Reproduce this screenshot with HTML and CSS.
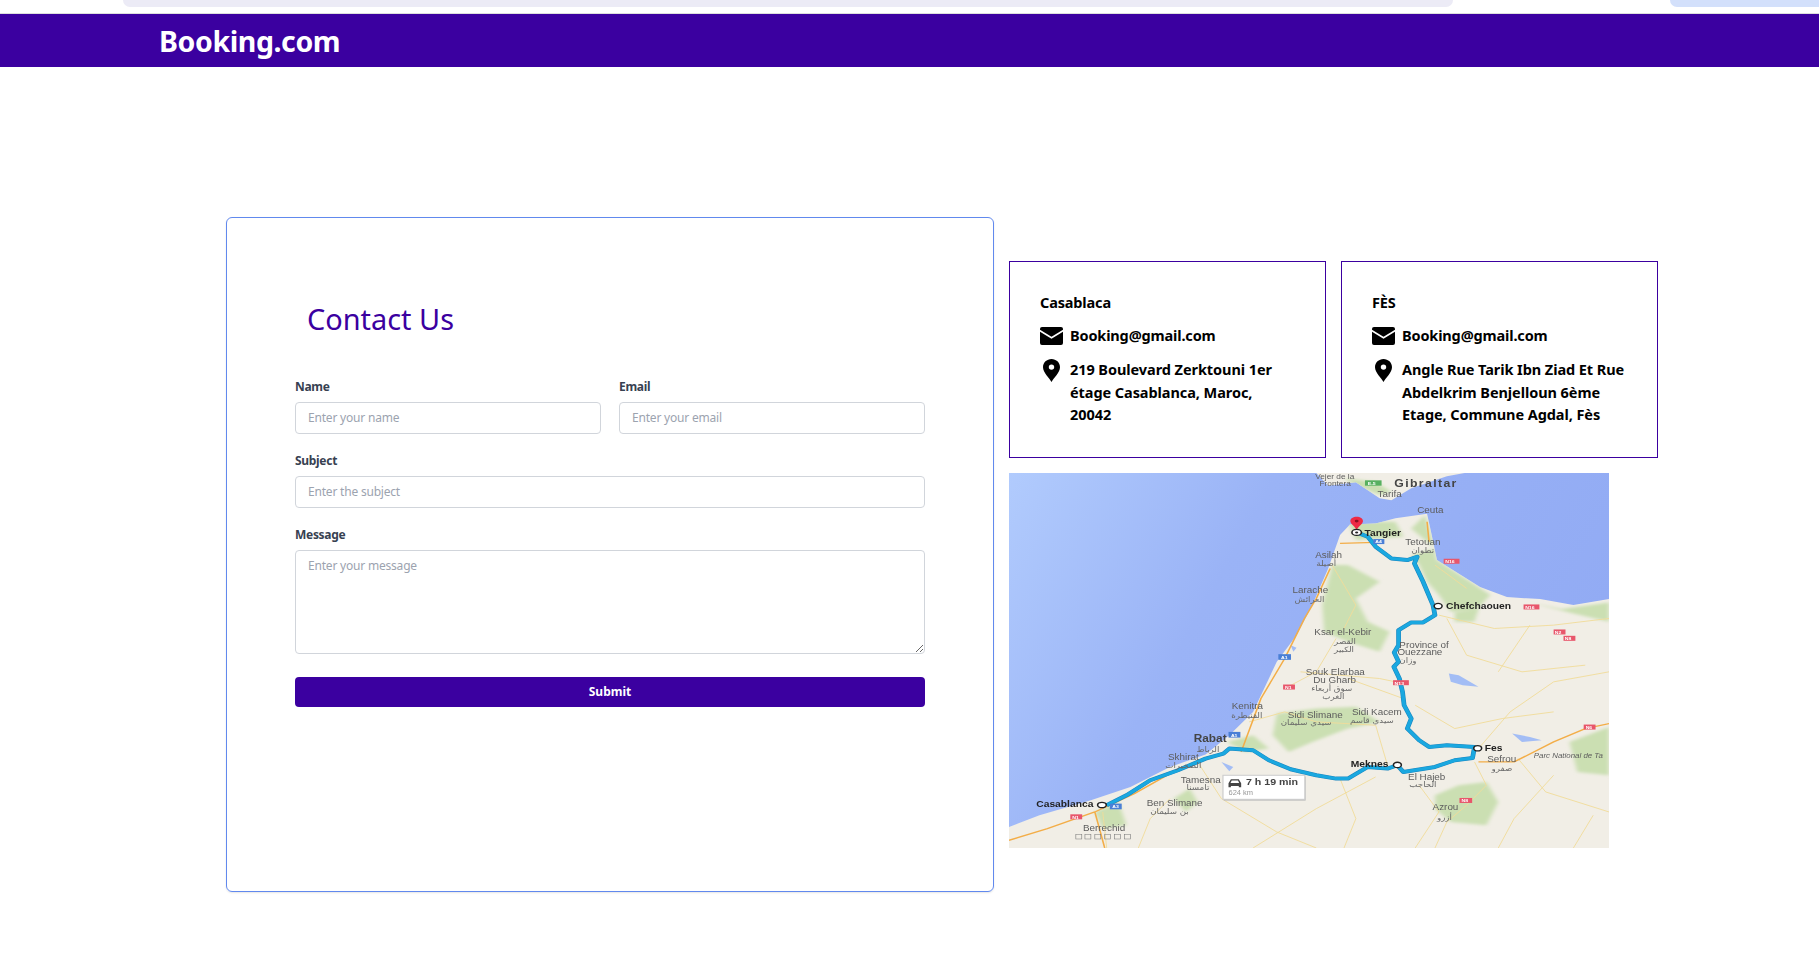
FILE: index.html
```html
<!DOCTYPE html>
<html lang="en">
<head>
<meta charset="utf-8">
<title>Booking.com - Contact Us</title>
<link rel="stylesheet" href="styles.css">
</head>
<body>
<div class="topstrip"><div class="pill-search"></div><div class="pill-action"></div></div>
<header class="navbar"><span class="brand">Booking.com</span></header>
<main class="contact-page">
  <section class="form-card">
    <h1 class="form-title">Contact Us</h1>
    <form class="form">
      <div class="row-two">
        <div class="field"><label class="label">Name</label><input class="input" type="text" placeholder="Enter your name"></div>
        <div class="field"><label class="label">Email</label><input class="input" type="email" placeholder="Enter your email"></div>
      </div>
      <div class="field"><label class="label">Subject</label><input class="input" type="text" placeholder="Enter the subject"></div>
      <div class="field"><label class="label">Message</label><textarea class="input textarea" placeholder="Enter your message"></textarea></div>
      <button class="submit" type="button">Submit</button>
    </form>
  </section>
  <aside class="info-col">
    <div class="offices">
      <article class="office">
        <h2 class="office-name">Casablaca</h2>
        <div class="office-row mail-row">
          <svg class="ico-mail" viewBox="0 0 23 18"><path d="M2 0h19a2 2 0 0 1 2 2v.7L11.5 9.8 0 2.7V2a2 2 0 0 1 2-2z"/><path d="M0 4.7l11.5 7.1L23 4.7V16a2 2 0 0 1-2 2H2a2 2 0 0 1-2-2z"/></svg>
          <span>Booking@gmail.com</span>
        </div>
        <div class="office-row addr-row">
          <svg class="ico-pin" viewBox="0 0 17 23"><path fill-rule="evenodd" d="M8.5 0C3.8 0 0 3.6 0 8.2 0 13.5 6.5 19 8.5 23c2-4 8.5-9.5 8.5-14.8C17 3.6 13.2 0 8.5 0zm0 10.8a2.7 2.7 0 1 1 0-5.4 2.7 2.7 0 0 1 0 5.4z"/></svg>
          <span>219 Boulevard Zerktouni 1er<br>étage Casablanca, Maroc,<br>20042</span>
        </div>
      </article>
      <article class="office">
        <h2 class="office-name">FÈS</h2>
        <div class="office-row mail-row">
          <svg class="ico-mail" viewBox="0 0 23 18"><path d="M2 0h19a2 2 0 0 1 2 2v.7L11.5 9.8 0 2.7V2a2 2 0 0 1 2-2z"/><path d="M0 4.7l11.5 7.1L23 4.7V16a2 2 0 0 1-2 2H2a2 2 0 0 1-2-2z"/></svg>
          <span>Booking@gmail.com</span>
        </div>
        <div class="office-row addr-row">
          <svg class="ico-pin" viewBox="0 0 17 23"><path fill-rule="evenodd" d="M8.5 0C3.8 0 0 3.6 0 8.2 0 13.5 6.5 19 8.5 23c2-4 8.5-9.5 8.5-14.8C17 3.6 13.2 0 8.5 0zm0 10.8a2.7 2.7 0 1 1 0-5.4 2.7 2.7 0 0 1 0 5.4z"/></svg>
          <span>Angle Rue Tarik Ibn Ziad Et Rue<br>Abdelkrim Benjelloun 6ème<br>Etage, Commune Agdal, Fès</span>
        </div>
      </article>
    </div>
    <svg class="map" viewBox="23 24 1517 1124" preserveAspectRatio="none">
      <defs>
        <linearGradient id="sea" x1="0" y1="0" x2="1" y2="0.35">
          <stop offset="0" stop-color="#b1cbfd"/><stop offset="0.4" stop-color="#9ab3f6"/><stop offset="1" stop-color="#92abf4"/>
        </linearGradient>
        <filter id="soft"><feGaussianBlur stdDeviation="5 4"/></filter>
        <clipPath id="shore"><path d="M23 1085 100 1050 230 1005 330 965 430 905 520 868 580 810 640 740 700 590 750 510 790 420 830 310 860 210 885 178 950 175 1000 160 1080 146 1090 200 1105 285 1214 366 1282 396 1366 402 1450 420 1540 402V1148H23ZM800 24 830 62 900 52 960 100 990 106 1040 70 1130 34 1175 24Z"/></clipPath>
      </defs>
      <rect x="23" y="24" width="1517" height="1124" fill="url(#sea)"/>
      <path class="land" d="M23 1085 100 1050 230 1005 330 965 430 905 520 868 580 810 640 740 700 590 750 510 790 420 830 310 860 210 885 178 950 175 1000 160 1080 146 1090 200 1105 285 1214 366 1282 396 1366 402 1450 420 1540 402V1148H23Z"/>
      <path class="land" d="M800 24 830 62 900 52 960 100 990 106 1040 70 1130 34 1175 24Z"/>
      <g class="greens">
        <path d="M1075 150 1090 210 1105 285 1190 350 1240 390 1200 440 1140 440 1110 390 1080 350 1060 300 1040 270 1100 250 1040 190Z"/>
        <path d="M840 300 880 300 960 350 900 400 930 470 985 500 960 560 880 530 820 500 815 420Z"/>
        <path d="M700 745 800 730 900 725 960 770 880 790 790 830 730 860 690 810Z"/>
        <path d="M575 830 640 810 680 850 620 860Z"/>
        <path d="M1440 830 1540 785V930L1460 920Z"/>
        <path d="M1100 990 1160 960 1230 950 1260 1010 1230 1080 1140 1070 1100 1030Z"/>
        <path d="M1340 412 1420 432 1540 412V470L1450 445Z"/>
        <path d="M240 1040 300 1010 320 1080 260 1090Z"/>
        <path d="M440 1000 480 970 500 1010 470 1040Z"/>
        <path d="M1150 440 1210 430 1200 470 1150 470Z"/>
        <path d="M880 170 1000 170 1020 215 900 225Z"/>
        <path d="M870 40 900 62 960 90 990 80 950 50Z"/>
      </g>
      <path class="lake" d="M1135 625 1160 630 1210 665 1170 660 1140 650Z"/>
      <path class="lake" d="M1295 805 1340 815 1370 825 1320 830Z"/>
      <path class="lake" d="M560 890 590 905 580 918Z"/>
      <path class="lake" d="M735 540 750 548 742 560Z"/>
      <path class="road-y" d="M1110 450 1250 490 1400 480 1540 460M760 620 960 640 1000 650M720 670 800 620 850 520M1200 890 1230 960 1180 1020 1130 1070 1100 1148M500 890 560 1000 700 1100 800 1148M950 780 980 900M1310 880 1380 980 1540 1040M1210 850 1290 740 1400 650 1540 620M950 935 800 1030 640 1148M260 1040 270 1148M1050 720 1150 790 1270 760 1400 740M840 300 900 420 870 490M1130 460 1180 570 1320 620 1480 600M630 770 720 740 800 770 950 780M1020 700 880 640M1340 480 1260 620M1050 1148 1110 1040 1060 960M1400 930 1300 1060 1260 1148M350 1148 380 1060 430 1000M1100 300 1180 370M860 940 900 1060 870 1148M1450 1148 1500 1050"/>
      <path class="road-o" d="M860 235 950 232M610 860 660 700 720 580 770 460 800 400 835 310M23 1125 120 1090 240 1040 340 985 430 925 520 880M1210 890 1300 890 1400 830 1480 790 1540 775M240 1040 265 1148M1080 170 1085 230"/>
      <path class="route-edge" d="M902 202 930 215 950 245 990 280 1030 285 1055 275 1048 295 1070 350 1095 420 1100 450 1070 472 1040 472 1008 495 1008 540 997 562 1008 590 996 605 1010 640 1018 680 1022 720 1040 760 1030 790 1060 825 1085 845 1130 840 1200 845 1195 878 1150 885 1100 905 1020 920 1005 900 980 910 930 905 880 940 850 940 800 930 735 912 680 885 640 855 580 850 565 865 520 880 450 915 380 945 320 990 270 1020"/>
      <path class="route" d="M902 202 930 215 950 245 990 280 1030 285 1055 275 1048 295 1070 350 1095 420 1100 450 1070 472 1040 472 1008 495 1008 540 997 562 1008 590 996 605 1010 640 1018 680 1022 720 1040 760 1030 790 1060 825 1085 845 1130 840 1200 845 1195 878 1150 885 1100 905 1020 920 1005 900 980 910 930 905 880 940 850 940 800 930 735 912 680 885 640 855 580 850 565 865 520 880 450 915 380 945 320 990 270 1020"/>
      <path class="pin" d="M902 155c-9 0-16 5-16 13 0 9 12 16 16 27 4-11 16-18 16-27 0-8-7-13-16-13z"/>
      <ellipse class="pin-dot" cx="902" cy="168" rx="5" ry="4"/>
      <ellipse class="stop" cx="902" cy="202" rx="12" ry="9"/><ellipse class="stop-dot" cx="902" cy="202" rx="4" ry="3"/>
      <ellipse class="stop" cx="1108" cy="423" rx="10" ry="8"/>
      <ellipse class="stop" cx="1208" cy="849" rx="10" ry="8"/>
      <ellipse class="stop" cx="1005" cy="899" rx="10" ry="8"/>
      <ellipse class="stop" cx="258" cy="1019" rx="11" ry="8"/>
      <g class="shield-b"><rect x="944" y="222" width="28" height="15"/><text x="949" y="235">A4</text><rect x="704" y="567" width="32" height="17"/><text x="711" y="581">A1</text><rect x="578" y="800" width="30" height="17"/><text x="584" y="814">A1</text><rect x="278" y="1015" width="30" height="17"/><text x="284" y="1029">A3</text></g>
      <g class="shield-r"><rect x="1122" y="281" width="40" height="15"/><text x="1126" y="294">N16</text><rect x="1324" y="418" width="40" height="15"/><text x="1328" y="431">N16</text><rect x="1400" y="493" width="30" height="15"/><text x="1403" y="506">N2</text><rect x="1425" y="512" width="30" height="15"/><text x="1428" y="525">N8</text><rect x="994" y="645" width="40" height="15"/><text x="998" y="658">N13</text><rect x="716" y="658" width="30" height="15"/><text x="721" y="671">N1</text><rect x="1476" y="778" width="30" height="15"/><text x="1481" y="791">N6</text><rect x="1162" y="998" width="32" height="15"/><text x="1167" y="1011">N8</text><rect x="178" y="1047" width="30" height="15"/><text x="183" y="1060">N1</text></g>
      <g class="shield-g"><rect x="923" y="46" width="42" height="16"/><text x="930" y="59">E-5</text></g>
      <g class="ml">
        <text class="tight" x="797" y="43">Vejer de la</text><text class="tight" x="808" y="62">Frontera</text><text x="955" y="96">Tarifa</text><text x="1055" y="143">Ceuta</text>
        <text x="1025" y="240">Tetouan</text><text x="797" y="280">Asilah</text><text x="740" y="385">Larache</text><text x="795" y="510">Ksar el-Kebir</text>
        <text x="1010" y="548">Province of</text><text x="1005" y="571">Ouezzane</text><text x="773" y="630">Souk Elarbaa</text><text x="792" y="654">Du Gharb</text>
        <text x="586" y="732">Kenitra</text><text x="728" y="758">Sidi Slimane</text><text x="890" y="748">Sidi Kacem</text><text x="425" y="884">Skhirat</text>
        <text x="457" y="952">Tamesna</text><text x="1232" y="891">Sefrou</text><text x="1032" y="945">El Hajeb</text><text x="1094" y="1035">Azrou</text>
        <text x="371" y="1022">Ben Slimane</text><text x="210" y="1098">Berrechid</text><text class="park" x="1350" y="878">Parc National de Ta</text>
      </g>
      <g class="ml ar">
        <text x="1040" y="263">تطوان</text><text x="800" y="303">أصيلة</text><text x="745" y="412">العرائش</text><text x="845" y="536">القصر</text><text x="845" y="561">الكبير</text>
        <text x="1010" y="595">وزان</text><text x="787" y="678">سوق أربعاء</text><text x="815" y="702">الغرب</text><text x="585" y="757">القنيطرة</text><text x="710" y="780">سيدي سليمان</text>
        <text x="885" y="772">سيدي قاسم</text><text x="497" y="860">الرباط</text><text x="418" y="908">الصخيرات</text><text x="472" y="975">تامسنا</text><text x="1243" y="918">صفرو</text>
        <text x="1035" y="966">الحاجب</text><text x="1105" y="1065">أزرو</text><text x="380" y="1045">بن سليمان</text>
      </g>
      <text class="mb big" x="997" y="67">Gibraltar</text>
      <text class="mb" x="922" y="212">Tangier</text>
      <text class="mb" x="1128" y="432">Chefchaouen</text>
      <text class="mb" x="1226" y="857">Fes</text>
      <text class="mb" x="887" y="906">Meknes</text>
      <text class="mb" x="92" y="1026">Casablanca</text>
      <text class="mb rabat" x="490" y="830">Rabat</text>
      <g class="tofu"><rect x="192" y="1108" width="15" height="13"/><rect x="215" y="1108" width="15" height="13"/><rect x="240" y="1108" width="15" height="13"/><rect x="265" y="1108" width="15" height="13"/><rect x="290" y="1108" width="15" height="13"/><rect x="315" y="1108" width="15" height="13"/></g>
      <rect class="tip-shadow" x="566" y="934" width="207" height="72"/>
      <rect class="tip" x="564" y="930" width="207" height="72"/>
      <path class="car" d="M584 942h20l6 12v12h-6v-4h-20v4h-6v-12zm2 4-3 7h22l-3-7z"/>
      <text class="mb trip" x="622" y="960">7 h 19 min</text>
      <text class="km" x="578" y="988">624 km</text>
    </svg>
  </aside>
</main>
</body>
</html>
```

FILE: styles.css
```css
* { box-sizing: border-box; }
html, body { margin: 0; padding: 0; background: #fff; }
body { font-family: "Noto Sans", "Liberation Sans", sans-serif; color: #000; overflow: hidden; height: 980px; }

.topstrip { display: flex; height: 14px; padding-left: 123px; border-bottom: 1px solid #ddd; }
.pill-search { width: 1330px; height: 7px; background: #ecebf6; border-radius: 0 0 14px 14px; }
.pill-action { flex: 1; height: 7px; margin-left: 217px; background: #d3e0fb; border-radius: 0 0 0 14px; }

.navbar { height: 53px; background: #3b00a0; display: flex; align-items: center; padding: 2px 0 0 159px; }
.brand { color: #fff; font-size: 28.5px; font-weight: 700; letter-spacing: -0.4px; line-height: 1; }

.contact-page { display: flex; align-items: flex-start; padding: 150px 0 0 226px; gap: 15px; }

.form-card { width: 768px; height: 675px; border: 1px solid #6189ee; border-radius: 6px; box-shadow: 0 1px 2px rgba(0,0,0,.1); padding: 81px 68px 0; }
.form-title { margin: 0 0 39px 12px; font-size: 28.9px; line-height: 40px; font-weight: 400; color: #3b00a0; }

.form { display: flex; flex-direction: column; gap: 18px; }
.row-two { display: grid; grid-template-columns: 306px 306px; gap: 18px; }
.field { display: flex; flex-direction: column; }
.label { font-size: 12px; line-height: 18px; font-weight: 700; letter-spacing: -0.3px; color: #374151; margin-bottom: 6px; }
.input { display: block; width: 100%; height: 32px; padding: 0 12px 2px; border: 1px solid #d1d5db; border-radius: 4px; font: 400 12px "Noto Sans", sans-serif; letter-spacing: -0.2px; color: #111; background: #fff; outline: none; }
.input::placeholder { color: #9ca3af; opacity: 1; }
.textarea { height: 104px; padding: 6px 12px; resize: vertical; }
.submit { height: 30px; margin-top: 5px; padding: 0 0 2px; border: 0; border-radius: 4px; background: #3b00a0; color: #fff; font: 700 12px "Noto Sans", sans-serif; }

.info-col { width: 649px; padding-top: 44px; display: flex; flex-direction: column; gap: 15px; }
.offices { display: flex; gap: 15px; }
.office { width: 317px; height: 197px; border: 1px solid #3b00a0; padding: 30px 20px 0 30px; font-size: 14.5px; font-weight: 700; letter-spacing: -0.15px; line-height: 22.5px; }
.office-name { margin: 0 0 15px; font-size: 14.5px; line-height: 20px; font-weight: 700; }
.office-row { display: flex; }
.ico-mail { width: 23px; height: 18px; margin-right: 7px; flex: none; fill: #000; }
.ico-pin { width: 17px; height: 23px; margin: 0 10px 0 3px; flex: none; fill: #000; }
.mail-row { align-items: center; height: 18px; }
.mail-row span { margin-top: -2px; }
.addr-row { margin-top: 14px; align-items: flex-start; letter-spacing: -0.07px; }
.addr-row span { margin-top: -1px; }

.map { display: block; width: 600px; height: 375px; filter: blur(0.4px); }
.land { fill: #f1eee6; }
.greens { clip-path: url(#shore); }
.greens path { fill: #cbdfb2; filter: url(#soft); }
.lake { fill: #a3bdf5; }
.road-o { fill: none; stroke: #f3ad47; stroke-width: 4; stroke-linejoin: round; }
.road-y { fill: none; stroke: #f1dc9a; stroke-width: 2.5; stroke-linejoin: round; }
.route-edge { fill: none; stroke: #1b86bf; stroke-width: 12; stroke-linejoin: round; }
.route { fill: none; stroke: #1aa8e0; stroke-width: 9; stroke-linejoin: round; }
.pin { fill: #ee2a45; }
.pin-dot { fill: #8a0f1f; }
.stop { fill: #fff; stroke: #222; stroke-width: 4; }
.stop-dot { fill: #222; }
.shield-b rect { fill: #4a7fd6; }
.shield-r rect { fill: #e8566b; }
.shield-g rect { fill: #57b060; }
.shield-b text, .shield-r text, .shield-g text { font: 700 13px "Liberation Sans", sans-serif; fill: #fff; }
.ml text { font: 400 25px "Liberation Sans", sans-serif; fill: #5c5c5c; }
.ml text.tight { font-size: 21px; }
.ml text.park { font-size: 20px; font-style: italic; }
.ar text { font: 400 22px "DejaVu Sans", sans-serif; fill: #666; }
.mb { font: 700 26px "Liberation Sans", sans-serif; fill: #222; }
.mb.big { font-size: 31px; letter-spacing: 3.5px; fill: #444; }
.mb.rabat { font-size: 30px; fill: #444; }
.mb.trip { font-size: 27px; fill: #444; }
.km { font: 400 19px "Liberation Sans", sans-serif; fill: #999; }
.tofu rect { fill: none; stroke: #777; stroke-width: 1.5; }
.tip { fill: #fff; stroke: #ccc; stroke-width: 3; }
.tip-shadow { fill: #bbb; }
.car { fill: #444; }
```
